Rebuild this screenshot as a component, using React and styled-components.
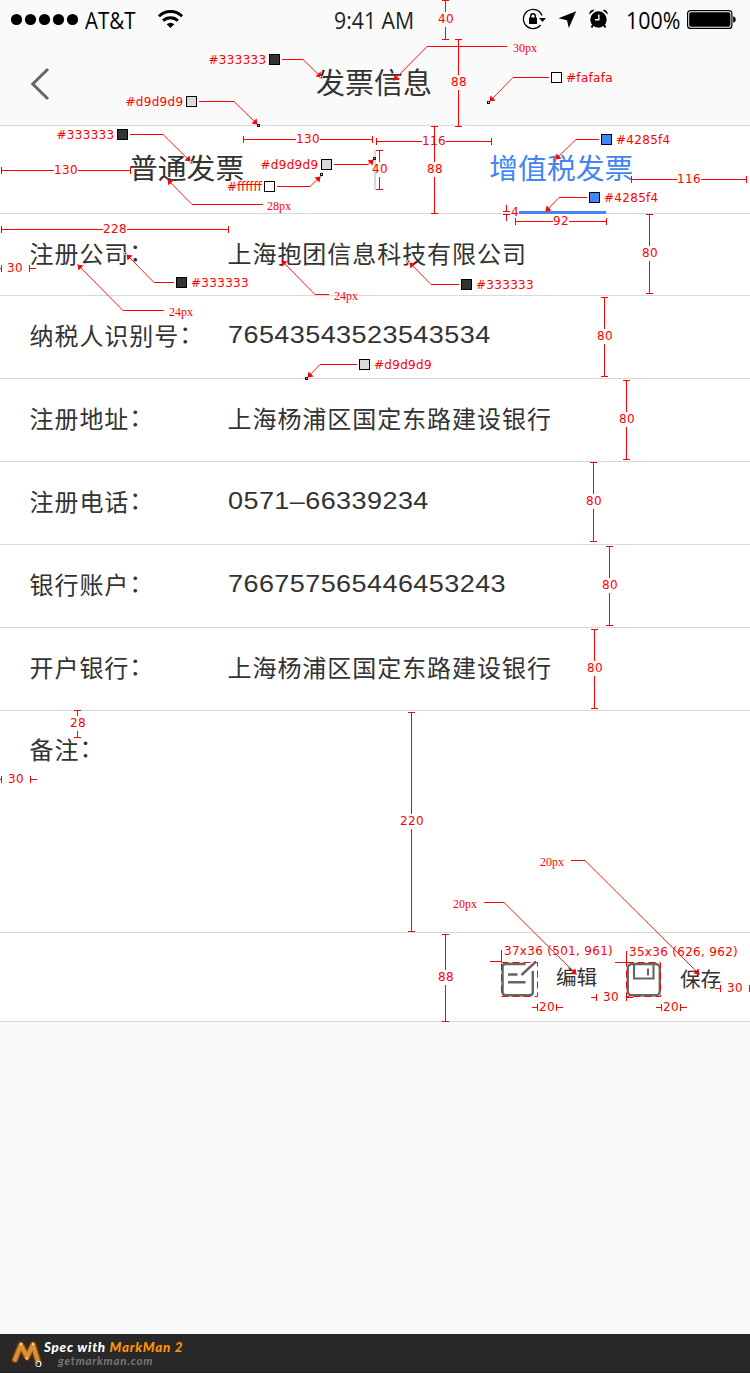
import React from "react";
import styled, { createGlobalStyle } from "styled-components";

const RED = "#ff0000";
const LINE = "#d9d9d9";
const INK = "#333333";
const BLUE = "#4285f4";

const GlobalStyle = createGlobalStyle`
  body {
    margin: 0;
    background: #fafafa;
    font-family: "Noto Sans CJK SC", sans-serif;
    color: ${INK};
  }
  * { box-sizing: border-box; }
`;

const Page = styled.div`
  position: relative;
  width: 750px;
  height: 1373px;
  display: flex;
  flex-direction: column;
  overflow: hidden;
  background: #fafafa;
`;

const StatusBar = styled.div`
  height: 40px;
  display: grid;
  grid-template-columns: 85px 73px 176px 189px 103px 61px 1fr;
  align-items: center;
`;

const StatusText = styled.span`
  font: 23px/38px "Open Sans", sans-serif;
  color: ${(p) => p.$color || "#000"};
  white-space: nowrap;
  transform: scaleX(${(p) => p.$squeeze});
  transform-origin: 0 50%;
`;

const Glyph = styled.svg`
  display: block;
  flex: none;
  overflow: visible;
`;

const Header = styled.header`
  height: 86px;
  display: grid;
  grid-template-columns: 89px 1fr 91px;
  align-items: center;
  border-bottom: 1px solid ${LINE};
`;

const BackButton = styled.div`
  padding-left: 30px;
  padding-top: 2px;
`;

const Title = styled.h1`
  margin: 0;
  padding-bottom: 3px;
  text-align: center;
  font-size: 29px;
  line-height: 44px;
  font-weight: 400;
`;

const Tabs = styled.nav`
  height: 88px;
  display: flex;
  align-items: center;
  background: #fff;
  border-bottom: 1px solid ${LINE};
`;

const Tab = styled.div`
  position: relative;
  flex: ${(p) => p.$width};
  height: 87px;
  line-height: 82px;
  padding-left: ${(p) => p.$indent}px;
  font-size: 28.8px;
  color: ${(p) => (p.$active ? BLUE : INK)};
`;

const Underline = styled.span`
  position: absolute;
  left: 143px;
  bottom: -1px;
  width: 87px;
  height: 3px;
  background: ${BLUE};
`;

const Divider = styled.span`
  width: 2px;
  height: 40px;
  background: ${LINE};
`;

const Form = styled.section`
  background: #fff;
`;

const Row = styled.div`
  height: ${(p) => (p.$first ? 82 : 83)}px;
  display: grid;
  grid-template-columns: 198px 1fr;
  align-items: center;
  padding: 0 30.5px ${(p) => (p.$first ? 3 : 5)}px 29.5px;
  border-bottom: 1px solid ${LINE};
`;

const Label = styled.span`
  font-size: 24px;
  letter-spacing: 0.95px;
  line-height: 40px;
  white-space: nowrap;
`;

const Colon = styled.span`
  line-height: 1;
  vertical-align: 2px;
`;

const Digits = styled.span`
  font: 24.8px/40px "Liberation Sans", sans-serif;
  letter-spacing: 0.38px;
  padding-top: 1px;
  transform: scaleX(1.09);
  transform-origin: 0 50%;
`;

const Remark = styled.div`
  height: 222px;
  padding: 18px 29.5px;
  border-bottom: 1px solid ${LINE};
`;

const Actions = styled.footer`
  height: 89px;
  display: flex;
  align-items: flex-start;
  padding: 28px 29px 0 501px;
  background: #fff;
  border-bottom: 1px solid ${LINE};
`;

const Action = styled.div`
  display: flex;
  gap: ${(p) => p.$gap}px;
  width: ${(p) => p.$width}px;
  flex: none;
`;

const ActionText = styled.span`
  font-size: 20.6px;
  line-height: 30px;
  padding-top: ${(p) => p.$drop}px;
  white-space: nowrap;
`;

const Credit = styled.div`
  margin-top: auto;
  height: 39px;
  display: flex;
  padding: 5px 0 0 11px;
  gap: 1px;
  background: #282828;
  border-bottom: 1px solid #211e1e;
`;

const CreditText = styled.div`
  font: italic 900 13.4px/17px "Lato", sans-serif;
  letter-spacing: 0.75px;
  color: ${(p) => p.$color || "#fff"};
  white-space: nowrap;
  em { color: #ff9200; }
`;

const CreditSite = styled(CreditText)`
  font-size: 11.5px;
  font-weight: 700;
  line-height: 10px;
  letter-spacing: 0.75px;
  padding-left: 14px;
  color: #777;
`;

const Overlay = styled.div`
  position: absolute;
  inset: 0;
`;

const Note = styled.span`
  position: absolute;
  left: ${(p) => p.$x}px;
  top: ${(p) => p.$y - 8}px;
  color: ${RED};
  white-space: nowrap;
  font: ${(p) => (p.$serif ? '12px/16px "Liberation Serif", serif' : '12px/16px "DejaVu Sans", sans-serif')};
  letter-spacing: ${(p) => (p.$serif ? 0 : p.$spacing ?? 0.3)}px;
`;

const Measure = styled(Note)`
  width: 40px;
  margin-left: -20px;
  text-align: center;
  letter-spacing: 0.35px;
`;

// [x, top, bottom, label, label centre y, label centre x]
const verticals = [
  [445, 0, 39, "40", 19, 446],
  [458, 39, 126, "88", 82, 459],
  [434, 126, 213, "88", 169, 435],
  [379, 150, 189, "40", 169, 380],
  [649, 214, 293, "80", 253, 650],
  [604, 297, 376, "80", 336, 605],
  [626, 380, 459, "80", 419, 627],
  [593, 462, 541, "80", 501, 594],
  [609, 546, 625, "80", 585, 610],
  [594, 629, 708, "80", 668, 595],
  [77, 710, 737, "28", 723, 78],
  [411, 712, 931, "220", 821, 412],
  [445, 934, 1021, "88", 977, 446],
];

// [left, right, y, label, label centre x]
const horizontals = [
  [1, 130, 170, "130", 66],
  [243, 372, 139, "130", 308],
  [376, 491, 141, "116", 434],
  [631, 746, 179, "116", 689],
  [515, 606, 221, "92", 561],
  [1, 228, 229, "228", 115],
];

// Narrow gaps: ticks pointing outward with the value between them.
const gaps = [
  [1, 29, 268, "30", 15],
  [1, 30, 779, "30", 16],
  [537, 556, 1007, "20", 547],
  [661, 680, 1007, "20", 671],
  [596, 626, 997, "30", 611],
  [720, 749, 988, "30", 735],
];

const swatches = [
  { color: INK, box: [269, 54], text: "#333333", at: [208.5, 60], path: [[282, 59], [303, 59], [321, 77]], dot: [321, 77], light: true },
  { color: LINE, box: [186, 96], text: "#d9d9d9", at: [125.5, 102], path: [[199, 101], [234, 101], [257, 124]], dot: [258, 125] },
  { color: "#fafafa", box: [551, 72], text: "#fafafa", at: [566, 78], path: [[549, 77], [513, 77], [489, 101]], dot: [488, 102] },
  { color: INK, box: [117, 129], text: "#333333", at: [56.5, 135], path: [[130, 134], [163, 134], [190, 161]], dot: [191, 162], light: true },
  { color: LINE, box: [321, 159], text: "#d9d9d9", at: [260.5, 165], path: [[334, 164], [368, 164], [373, 159]], dot: [374, 158] },
  { color: "#ffffff", box: [264, 181], text: "#ffffff", at: [227, 187], spacing: 0, path: [[277, 186], [310, 186], [320, 176]], dot: [321, 174] },
  { color: BLUE, box: [601, 134], text: "#4285f4", at: [616, 140], path: [[599, 139], [576, 139], [555, 159]], dot: [554, 160], warm: true },
  { color: BLUE, box: [589, 192], text: "#4285f4", at: [604, 198], path: [[587, 197], [559, 197], [545, 211]], dot: [544, 212], warm: true },
  { color: INK, box: [176, 277], text: "#333333", at: [191, 283], path: [[174, 282], [154, 282], [126, 254]], dot: [125, 253], light: true },
  { color: INK, box: [461, 279], text: "#333333", at: [476, 285], path: [[459, 284], [431, 284], [409, 262]], dot: [408, 261], light: true },
  { color: LINE, box: [359, 359], text: "#d9d9d9", at: [374, 365], path: [[357, 364], [320, 364], [307, 377]], dot: [306, 378] },
];

const sizes = [
  ["30px", 513, 48, [[507, 46], [427, 46], [393, 80]]],
  ["28px", 267, 206, [[263, 204], [192, 204], [167, 179]]],
  ["24px", 169, 312, [[164, 310], [123, 310], [77, 264]]],
  ["24px", 334, 296, [[329, 294], [315, 294], [281, 260]]],
  ["20px", 453, 904, [[484, 902], [504, 902], [576, 974]]],
  ["20px", 540, 862, [[571, 860], [585, 860], [699, 974]]],
];

function Leader({ path }) {
  const [a, b, c] = path;
  const sx = Math.sign(c[0] - b[0]);
  const sy = Math.sign(c[1] - b[1]);
  return (
    <g>
      <path d={`M${a[0]} ${a[1] + 0.5}H${b[0]}`} />
      <path d={`M${b[0]} ${b[1] + 0.5}L${c[0] + 0.5} ${c[1] + 0.5}`} strokeWidth="0.9" />
      <path d={`M${c[0] + 0.5} ${c[1] + 0.5}l${-6 * sx} ${-1 * sy}l${5 * sx} ${-5 * sy}z`} fill={RED} stroke="none" />
    </g>
  );
}

function Annotations() {
  return (
    <Overlay>
      <Glyph width="750" height="1373" fill="none" stroke={RED}>
        {verticals.map(([x, t, b, , cy]) => (
          <path key={`${x}-${t}`} d={`M${x - 3} ${t + 0.5}h7M${x - 3} ${b + 0.5}h7M${x + 0.5} ${t}V${cy - 7}M${x + 0.5} ${cy + 8}V${b}`} />
        ))}
        {horizontals.map(([l, r, y, text, cx]) => {
          const half = text.length * 4;
          return <path key={`${l}-${y}`} d={`M${l + 0.5} ${y - 3}v7M${r + 0.5} ${y - 3}v7M${l} ${y + 0.5}H${cx - half}M${cx + half} ${y + 0.5}H${r}`} />;
        })}
        {gaps.map(([l, r, y]) => (
          <path key={`${l}-${y}`} d={`M${l + 0.5} ${y - 3}v7M${r + 0.5} ${y - 3}v7M${l - 5} ${y + 0.5}h5M${r + 1} ${y + 0.5}h6`} />
        ))}
        <path d="M503 211.5h7M503 214.5h7M506.500 205v6M506.500 215v6" />
        {swatches.map((s) => (
          <g key={s.box.join()}>
            <Leader path={s.path} />
            <rect x={s.box[0] + 0.5} y={s.box[1] + 0.5} width="10" height="10" fill={s.color} stroke="#000" />
            <rect x={s.dot[0] - 0.5} y={s.dot[1] - 0.5} width="2" height="2" fill={s.color} stroke={s.warm ? "#b8761c" : s.light ? "#bbb" : "#111"} />
          </g>
        ))}
        {sizes.map(([, x, y, path]) => <Leader key={`${x}-${y}`} path={path} />)}
        <path d="M490 961.5H501M501.500 950V962M615 962.5H626M626.500 951V963" />
      </Glyph>
      {verticals.map(([x, t, , text, cy, cx]) => <Measure key={`${x}-${t}`} $x={cx} $y={cy}>{text}</Measure>)}
      {horizontals.map(([l, , y, text, cx]) => <Measure key={`${l}-${y}`} $x={cx} $y={y}>{text}</Measure>)}
      {gaps.map(([l, , y, text, cx]) => <Measure key={`${l}-${y}`} $x={cx} $y={y}>{text}</Measure>)}
      <Measure $x={515} $y={212}>4</Measure>
      {swatches.map((s) => <Note key={s.box.join()} $x={s.at[0]} $y={s.at[1]} $spacing={s.spacing}>{s.text}</Note>)}
      {sizes.map(([text, x, y]) => <Note key={`${x}-${y}`} $x={x} $y={y} $serif>{text}</Note>)}
      <Note $x={504} $y={951}>37x36 (501, 961)</Note>
      <Note $x={629} $y={952}>35x36 (626, 962)</Note>
    </Overlay>
  );
}

const SignalDots = () => (
  <Glyph width="85" height="40">
    {[16.5, 30.5, 44.5, 58.5, 72.5].map((cx) => <circle key={cx} cx={cx} cy="19.500" r="5.600" />)}
  </Glyph>
);

const Wifi = () => (
  <Glyph width="26" height="40" viewBox="158 0 26 40" fill="none" stroke="#000" strokeWidth="2.900">
    <path d="M158.900 16.300A16.600 16.600 0 0 1 182.100 16.300" />
    <path d="M163.100 20.800A10.500 10.500 0 0 1 177.900 20.800" />
    <path d="M166.700 24.300A5.500 5.500 0 0 1 174.300 24.300L170.500 28Z" fill="#000" stroke="none" />
  </Glyph>
);

const StatusIcons = () => (
  <Glyph width="103" height="40" viewBox="523 0 103 40">
    <path d="M542 15.500A9.600 9.600 0 1 0 540.500 25" fill="none" stroke="#000" strokeWidth="1.300" />
    <path d="M539 18h7l-3.500 4z" />
    <rect x="529" y="17.500" width="8" height="6.500" rx=".6" />
    <path d="M530.700 18V16a2.300 2.300 0 0 1 4.600 0V18" fill="none" stroke="#000" strokeWidth="1.400" />
    <path d="M576.200 11.300L568.800 28L567 20.200L558.500 18.300Z" />
    <circle cx="598.500" cy="19.500" r="8.200" />
    <path d="M589.200 14.500a4.200 4.200 0 0 1 5.300-4.500zM607.800 14.500a4.200 4.200 0 0 0-5.300-4.500z" />
    <path d="M593 25l-1.500 2.500M604 25l1.500 2.500" stroke="#000" strokeWidth="2" />
    <path d="M598.800 14.500V19.800H595" fill="none" stroke="#fff" strokeWidth="1.400" />
  </Glyph>
);

const Battery = () => (
  <Glyph width="63" height="40" viewBox="687 0 63 40">
    <rect x="687.600" y="10.600" width="44.300" height="17.800" rx="3" fill="none" stroke="#000" strokeWidth="1.200" />
    <rect x="689.200" y="12.200" width="41.200" height="14.600" rx="1.800" />
    <path d="M733.200 16.200c3.400 1 3.400 5.600 0 6.600z" />
  </Glyph>
);

const EditIcon = () => (
  <Glyph width="37" height="36" viewBox="501 961 37 36" fill="none" stroke="#666" strokeWidth="2.400">
    <path d="M525.500 964H505.500Q502.600 964 502.600 967V992.300Q502.600 995.200 505.500 995.200H530Q532.800 995.200 532.800 992.300V971" />
    <path d="M536 961.500L521.500 975M508 974.500H517.500M508 982.300H525.500" />
    <rect x="501.500" y="962.500" width="36" height="34" stroke={RED} strokeWidth="1" strokeDasharray="7 4" />
  </Glyph>
);

const SaveIcon = () => (
  <Glyph width="35" height="36" viewBox="626 961 35 36" fill="none" stroke="#666" strokeWidth="2.400">
    <rect x="627.800" y="964" width="32" height="31.200" rx="4" />
    <path d="M634 964V978.500H653.500V964M648 968.500V975.500" strokeWidth="2.100" />
    <rect x="626.500" y="962.500" width="34" height="34" stroke={RED} strokeWidth="1" strokeDasharray="7 4" />
  </Glyph>
);

const Mascot = () => (
  <Glyph width="32" height="30" viewBox="11 1339 32 30" fill="none" strokeLinecap="round" strokeLinejoin="round">
    <path d="M15 1359.500L21 1345L27 1357L33 1345L38.500 1363" stroke="#7a400a" strokeWidth="7" />
    <path d="M15 1359.500L21 1345L27 1357L33 1345L38.500 1363" stroke="#b86c1b" strokeWidth="5" />
    <path d="M15 1359.500L21 1345L27 1357L33 1345L38.500 1363" stroke="#d8923a" strokeWidth="4" strokeDasharray=".1 3" />
    <circle cx="21" cy="1344" r="1.200" fill="#ffe27a" />
    <circle cx="33" cy="1344" r="1.200" fill="#ffe27a" />
    <circle cx="27" cy="1358.500" r="1.200" fill="#ffe27a" />
    <circle cx="38.500" cy="1364" r="3" fill="#eee" />
    <circle cx="38.300" cy="1364" r="2" fill="#111" />
    <circle cx="37.700" cy="1363.300" r=".6" fill="#fff" />
  </Glyph>
);

const fields = [
  ["注册公司", "上海抱团信息科技有限公司"],
  ["纳税人识别号", "76543543523543534", true],
  ["注册地址", "上海杨浦区国定东路建设银行"],
  ["注册电话", "0571–66339234", true],
  ["银行账户", "766757565446453243", true],
  ["开户银行", "上海杨浦区国定东路建设银行"],
];

export default function App() {
  return (
    <Page>
      <GlobalStyle />
      <StatusBar>
        <SignalDots />
        <StatusText $squeeze={0.89}>AT&amp;T</StatusText>
        <Wifi />
        <StatusText $squeeze={0.925} $color="#231f1c">9:41 AM</StatusText>
        <StatusIcons />
        <StatusText $squeeze={0.93}>100%</StatusText>
        <Battery />
      </StatusBar>
      <Header>
        <BackButton>
          <Glyph width="20" height="34" viewBox="30 67 20 34" fill="none" stroke="#666" strokeWidth="3">
            <path d="M48 69L32.800 84L48 99" />
          </Glyph>
        </BackButton>
        <Title>发票信息</Title>
      </Header>
      <Tabs>
        <Tab $width="0 0 374px" $indent={129}>普通发票</Tab>
        <Divider />
        <Tab $width="1" $indent={113.3} $active>增值税发票<Underline /></Tab>
      </Tabs>
      <Form>
        {fields.map(([label, value, numeric], i) => (
          <Row key={label} $first={i === 0}>
            <Label>{label}<Colon>：</Colon></Label>
            {numeric ? <Digits>{value}</Digits> : <Label>{value}</Label>}
          </Row>
        ))}
        <Remark><Label>备注<Colon>：</Colon></Label></Remark>
      </Form>
      <Actions>
        <Action $gap={18} $width={125}><EditIcon /><ActionText $drop={0}>编辑</ActionText></Action>
        <Action $gap={19} $width={95}><SaveIcon /><ActionText $drop={2}>保存</ActionText></Action>
      </Actions>
      <Credit>
        <Mascot />
        <div>
          <CreditText>Spec with <em>MarkMan 2</em></CreditText>
          <CreditSite>getmarkman.com</CreditSite>
        </div>
      </Credit>
      <Annotations />
    </Page>
  );
}
